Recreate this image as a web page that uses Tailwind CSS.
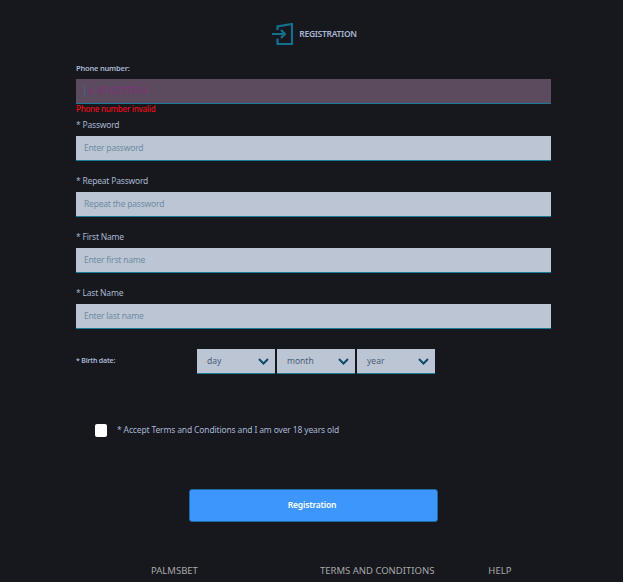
<!DOCTYPE html>
<html lang="en">
<head>
  <meta charset="UTF-8" />
  <title>Registration</title>
  <script src="https://cdn.jsdelivr.net/npm/@tailwindcss/browser@4"></script>
</head>
<body class="bg-[#16181e] h-[582px] overflow-hidden font-['Noto_Sans',sans-serif]">
  <div class="w-[475px] ml-[76px]">
    <!-- header -->
    <div class="flex items-center justify-center h-[65px] pt-[3px] pl-[2px] gap-[6px]">
      <svg width="21" height="22" viewBox="0 0 21 22" fill="none" stroke="#14708f" stroke-width="2.2">
        <path d="M5.5 7V3.5L20 1V21H5.5V15.5" />
        <path d="M0 11H13M9 7l4 4-4 4" />
      </svg>
      <span class="text-[8.5px] font-semibold text-[#a9b6d0] tracking-[-0.3px]">REGISTRATION</span>
    </div>

    <label class="block text-[7.5px] font-semibold text-[#a9b6d0] leading-[6px] tracking-[-0.2px]">Phone number:</label>
    <div class="mt-[8px] h-[25px] bg-[#5c4a5f] border-b border-[#1c7a99] flex items-center pl-[8px]">
      <span class="w-px h-[12px] bg-[#3e6488] mr-[3px]"></span>
      <span class="text-[8.5px] font-medium text-[#80307a]">e. 0712777774</span>
    </div>
    <p class="text-[8px] font-medium text-[#f00a16] leading-[10px] tracking-[-0.25px]">Phone number invalid</p>

    <label class="block text-[8.5px] text-[#a9b6d0] leading-[12px] mt-[5px] tracking-[-0.2px]">* Password</label>
    <div class="mt-[5px] h-[25px] bg-[#bcc5d4] border-b border-[#1c7a99] flex items-center pl-[8px] text-[8.5px] text-[#6f8ca3] tracking-[-0.2px]">Enter password</div>

    <label class="block text-[8.5px] text-[#a9b6d0] leading-[12px] mt-[14px] tracking-[-0.2px]">* Repeat Password</label>
    <div class="mt-[5px] h-[25px] bg-[#bcc5d4] border-b border-[#1c7a99] flex items-center pl-[8px] text-[8.5px] text-[#6f8ca3] tracking-[-0.2px]">Repeat the password</div>

    <label class="block text-[8.5px] text-[#a9b6d0] leading-[12px] mt-[14px] tracking-[-0.2px]">* First Name</label>
    <div class="mt-[5px] h-[25px] bg-[#bcc5d4] border-b border-[#1c7a99] flex items-center pl-[8px] text-[8.5px] text-[#6f8ca3] tracking-[-0.2px]">Enter first name</div>

    <label class="block text-[8.5px] text-[#a9b6d0] leading-[12px] mt-[14px] tracking-[-0.2px]">* Last Name</label>
    <div class="mt-[5px] h-[25px] bg-[#bcc5d4] border-b border-[#1c7a99] flex items-center pl-[8px] text-[8.5px] text-[#6f8ca3] tracking-[-0.2px]">Enter last name</div>

    <!-- birth date -->
    <div class="flex items-center mt-[20px]">
      <span class="w-[121px] text-[7px] font-semibold text-[#a9b6d0] tracking-[-0.2px]">* Birth date:</span>
      <div class="flex gap-[2px]">
        <div class="w-[78px] h-[25px] bg-[#bcc5d4] border-b border-[#1c7a99] flex items-center justify-between pl-[10px] pr-[6px] text-[8.5px] text-[#4a6076]">
          day
          <svg width="11" height="7" viewBox="0 0 11 7" fill="none" stroke="#0f4a68" stroke-width="2"><path d="M1 1l4.5 4.5L10 1" /></svg>
        </div>
        <div class="w-[78px] h-[25px] bg-[#bcc5d4] border-b border-[#1c7a99] flex items-center justify-between pl-[10px] pr-[6px] text-[8.5px] text-[#4a6076]">
          month
          <svg width="11" height="7" viewBox="0 0 11 7" fill="none" stroke="#0f4a68" stroke-width="2"><path d="M1 1l4.5 4.5L10 1" /></svg>
        </div>
        <div class="w-[78px] h-[25px] bg-[#bcc5d4] border-b border-[#1c7a99] flex items-center justify-between pl-[10px] pr-[6px] text-[8.5px] text-[#4a6076]">
          year
          <svg width="11" height="7" viewBox="0 0 11 7" fill="none" stroke="#0f4a68" stroke-width="2"><path d="M1 1l4.5 4.5L10 1" /></svg>
        </div>
      </div>
    </div>

    <!-- terms -->
    <div class="flex items-center mt-[50px] ml-[19px]">
      <span class="w-[12px] h-[13px] bg-white rounded-[2px]"></span>
      <span class="ml-[10px] text-[8.5px] text-[#a9b6d0] tracking-[-0.15px]">* Accept Terms and Conditions and I am over 18 years old</span>
    </div>

    <button class="block w-[249px] h-[33px] ml-[113px] mt-[52px] pr-[3px] bg-[#3d96fb] border border-[#1c6aa8] rounded-[3px] text-[8.5px] font-semibold text-white tracking-[-0.2px]">Registration</button>
  </div>

  <!-- footer -->
  <div class="flex mt-[43px] text-[9.5px] text-[#a8a8a8] leading-[12px] whitespace-nowrap">
    <span class="ml-[151px]">PALMSBET</span>
    <span class="ml-[122px]">TERMS AND CONDITIONS</span>
    <span class="ml-[54px]">HELP</span>
  </div>
</body>
</html>
